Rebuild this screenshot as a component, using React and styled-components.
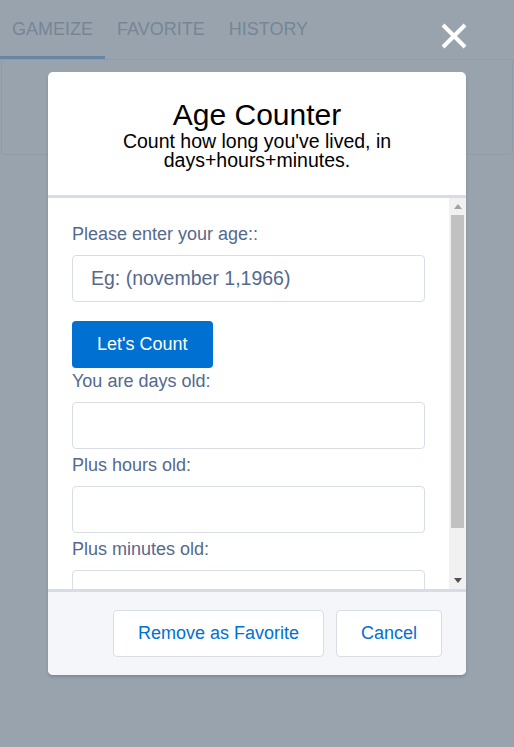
import React from "react"
import styled, { createGlobalStyle } from "styled-components"

const GlobalStyle = createGlobalStyle`
  html, body {
    margin: 0;
    padding: 0;
    background: #ffffff;
    font-family: "Liberation Sans", Arial, sans-serif;
  }
  * { box-sizing: border-box; }
`

const Page = styled.div`
  width: 514px;
  height: 747px;
  position: relative;
  overflow: hidden;
`

const Tabs = styled.ul`
  display: flex;
  margin: 0;
  padding: 0;
  list-style: none;
  border-bottom: 1px solid #d8dde6;
`

const Tab = styled.li`
  height: 59px;
  line-height: 59px;
  padding: 0 12px;
  font-size: 18px;
  color: #54698d;
  text-transform: uppercase;
  box-shadow: ${(p) => (p.$active ? "inset 0 -3px 0 #0070d2" : "none")};
`

const Panel = styled.div`
  height: 95px;
  margin: 0 1px;
  border: 1px solid #d8dde6;
  border-top: none;
  border-radius: 0 0 4px 4px;
`

const Backdrop = styled.div`
  position: absolute;
  inset: 0;
  background: rgba(126, 140, 153, 0.8);
  display: flex;
  justify-content: center;
  align-items: flex-start;
  padding-top: 72px;
`

const CloseButton = styled.button`
  position: absolute;
  top: 23px;
  right: 47px;
  width: 26px;
  height: 26px;
  padding: 0;
  border: none;
  background: none;
  display: flex;
`

const Modal = styled.div`
  width: 418px;
  background: #ffffff;
  border-radius: 5px;
  box-shadow: 0 2px 3px rgba(0, 0, 0, 0.16);
  display: flex;
  flex-direction: column;
  overflow: hidden;
`

const Header = styled.header`
  padding: 25px 16px;
  border-bottom: 3px solid #d8dce6;
  text-align: center;
  color: #000000;
`

const Title = styled.h2`
  margin: 0;
  font-size: 30px;
  line-height: 35px;
  font-weight: normal;
`

const Tagline = styled.p`
  margin: 0;
  font-size: 19.5px;
  line-height: 19px;
`

const Body = styled.div`
  display: flex;
  height: 391px;
`

const Content = styled.div`
  flex: 1;
  overflow: hidden;
  padding: 23px 24px 0;
`

const Scrollbar = styled.div`
  width: 17px;
  display: flex;
  flex-direction: column;
  background: #f1f1f1;
`

const ScrollArrow = styled.div`
  height: 17px;
  display: flex;
  align-items: center;
  justify-content: center;
`

const Track = styled.div`
  flex: 1;
  padding: 0 2px;
`

const Thumb = styled.div`
  height: 313px;
  background: #c1c1c1;
`

const Label = styled.label`
  display: block;
  font-size: 18px;
  line-height: 26px;
  margin-bottom: 8px;
  color: #54698d;
`

const Input = styled.input`
  display: block;
  width: 100%;
  height: 47px;
  margin: 0 0 ${(p) => p.$gap}px;
  padding: 0 18px;
  border: 1px solid #d8dde6;
  border-radius: 4px;
  background: #ffffff;
  font-family: inherit;
  font-size: 19.5px;
  color: #16325c;
  outline: none;

  &::placeholder {
    color: #54698d;
    opacity: 1;
  }
`

const PrimaryButton = styled.button`
  display: block;
  height: 47px;
  padding: 0 25px;
  border: none;
  border-radius: 4px;
  background: #0070d2;
  color: #ffffff;
  font-family: inherit;
  font-size: 18px;
`

const Footer = styled.footer`
  display: flex;
  justify-content: flex-end;
  gap: 12px;
  padding: 18px 24px;
  border-top: 3px solid #d8dce6;
  background: #f4f6f9;
`

const NeutralButton = styled.button`
  height: 47px;
  padding: 0 24px;
  border: 1px solid #d8dde6;
  border-radius: 4px;
  background: #ffffff;
  color: #0070d2;
  font-family: inherit;
  font-size: 18px;
`

const outputs = ["You are days old:", "Plus hours old:", "Plus minutes old:"]

export default function App() {
  return (
    <Page>
      <GlobalStyle />
      <Tabs>
        <Tab $active>Gameize</Tab>
        <Tab>Favorite</Tab>
        <Tab>History</Tab>
      </Tabs>
      <Panel />

      <Backdrop>
        <CloseButton aria-label="Close">
          <svg width="26" height="26" viewBox="0 0 26 26">
            <path d="M2 2 L24 24 M24 2 L2 24" stroke="#ffffff" strokeWidth="4" />
          </svg>
        </CloseButton>

        <Modal>
          <Header>
            <Title>Age Counter</Title>
            <Tagline>Count how long you've lived, in days+hours+minutes.</Tagline>
          </Header>

          <Body>
            <Content>
              <Label>Please enter your age::</Label>
              <Input $gap={19} placeholder="Eg: (november 1,1966)" />
              <PrimaryButton>Let's Count</PrimaryButton>
              {outputs.map((text, i) => (
                <div key={text}>
                  <Label>{text}</Label>
                  <Input $gap={i < outputs.length - 1 ? 3 : 0} />
                </div>
              ))}
            </Content>
            <Scrollbar>
              <ScrollArrow>
                <svg width="8" height="5" viewBox="0 0 8 5">
                  <path d="M0 5 L4 0 L8 5 Z" fill="#a3a3a3" />
                </svg>
              </ScrollArrow>
              <Track>
                <Thumb />
              </Track>
              <ScrollArrow>
                <svg width="8" height="5" viewBox="0 0 8 5">
                  <path d="M0 0 L4 5 L8 0 Z" fill="#505050" />
                </svg>
              </ScrollArrow>
            </Scrollbar>
          </Body>

          <Footer>
            <NeutralButton>Remove as Favorite</NeutralButton>
            <NeutralButton>Cancel</NeutralButton>
          </Footer>
        </Modal>
      </Backdrop>
    </Page>
  )
}
